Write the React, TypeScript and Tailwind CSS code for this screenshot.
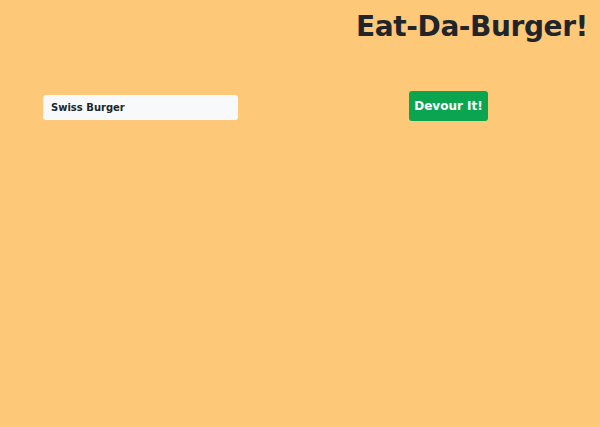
export default function App() {
  return (
    <div className="w-[600px] h-[427px] bg-[#fdc878] font-['DejaVu_Sans',sans-serif] overflow-hidden">
      {/* Header */}
      <div className="flex justify-end pr-[12px] pt-[9px]">
        <h1 className="text-[28px] font-bold text-[#212529] tracking-[-0.4px] leading-[36px]">
          Eat-Da-Burger!
        </h1>
      </div>

      {/* Order row */}
      <div className="flex mt-[46px]">
        <div className="w-[300px] pl-[43px] pt-[4px]">
          <div className="w-[195px] h-[25px] bg-[#f7f9fb] rounded-[3px] flex items-center px-[8px]">
            <span className="text-[10px] font-bold text-[#212529]">Swiss Burger</span>
          </div>
        </div>
        <div className="w-[300px] flex pl-[109px]">
          <button className="w-[79px] h-[30px] bg-[#0ba54f] rounded-[3px] text-white text-[12px] font-bold">
            Devour It!
          </button>
        </div>
      </div>
    </div>
  );
}
